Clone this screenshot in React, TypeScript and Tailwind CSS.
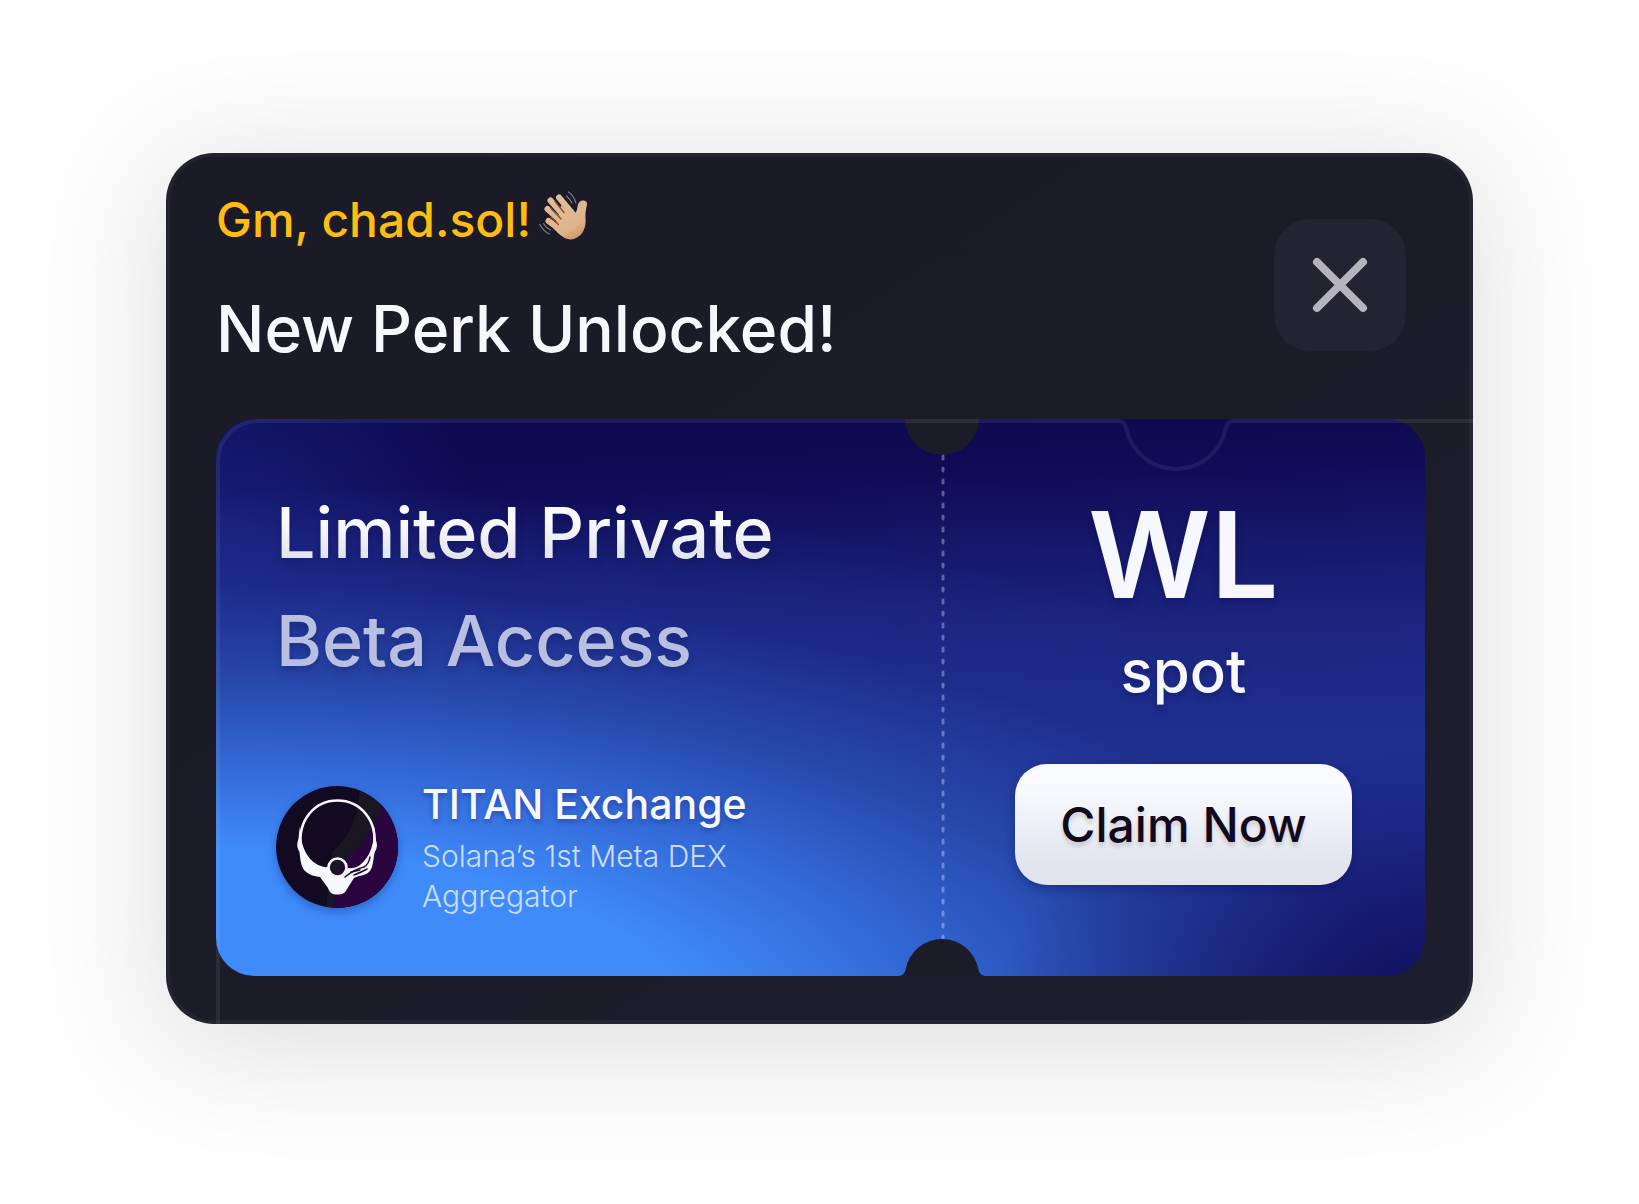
import React from "react";

function WavingHand() {
  return (
    <svg viewBox="0 0 50 50" className="mb-2 size-[50px]" role="img" aria-label="waving hand">
      <defs>
        <linearGradient id="skin" gradientUnits="userSpaceOnUse" x1="12" y1="6" x2="40" y2="50">
          <stop offset="0" stopColor="#e3bd98" />
          <stop offset="0.7" stopColor="#dfb48c" />
          <stop offset="1" stopColor="#c98f5c" />
        </linearGradient>
      </defs>
      <g stroke="url(#skin)" strokeWidth="6" strokeLinecap="round" fill="none">
        <path d="M11.5 9.5 L25 25" />
        <path d="M20 6.5 L33 22" />
        <path d="M8.5 18 L24 32" />
        <path d="M9.5 30 L22 39" />
      </g>
      <path
        d="M22 14 L31 22 C33 24 36 23 37.5 20 C39 17 38 13 41 10.5 C44 8.5 48.5 10 48 13.5 C47.5 17 46 21 46.5 27 C47.5 36 44 45 35 48 C29 49.5 25 47 20 43 L14 37 L20 26 Z"
        fill="url(#skin)"
      />
      <g stroke="#7a4a22" strokeWidth="1.2" strokeLinecap="round" fill="none">
        <path d="M16 10.5 L25 21.5" />
        <path d="M12 17.5 L22 28" />
        <path d="M11.5 26 L19.5 33.5" />
      </g>
      <g stroke="#777681" strokeWidth="1.3" strokeLinecap="round" fill="none">
        <path d="M29.5 1 Q35 5 37 12" />
        <path d="M27.5 5 Q31 8 33 12" />
        <path d="M0.8 33.5 Q4.5 40.5 10.5 43" />
        <path d="M4.5 32.5 Q7 37 11.5 39" />
      </g>
    </svg>
  );
}

function TitanLogo() {
  return (
    <svg
      viewBox="0 0 122 122"
      className="size-[122px] shrink-0 overflow-hidden rounded-full shadow-[0_4px_8px_rgba(20,30,120,0.35)]"
      role="img"
      aria-label="TITAN Exchange"
    >
      <rect width="122" height="122" fill="#120a20" />
      <path d="M84 0 C82 24 78 48 56 66 L50 122 H122 V0 Z" fill="#1a1624" />
      <path d="M108 12 C101 36 92 58 68 74 C60 90 60 105 58 122 H122 V12 Z" fill="#2b053f" />
      <g fill="none" stroke="#f7f8fd">
        <path d="M25 62 C21 34 39 14.5 61.5 14.5 C84 14.5 102 34 98 62" strokeWidth="2.6" />
        <circle cx="61.5" cy="81.5" r="9" strokeWidth="2.6" />
      </g>
      <path
        d="M24 40 C22.5 49 23 53 21.8 55 C20.5 59 21.5 63 23.5 66 C24.5 77 26 82 29 85 C35 90.5 40 90 44 91 L52 102 C54 107 56 108.5 61.5 108.5 C67 108.5 69 107 71 103 L78 92 C84 89 90 90 94 85 C97.5 80 97 73 98.8 66 C101.5 62 101.5 58 100 54.5 C99 51 99.5 47 98 40 C98.5 57 95 70 84 79 C80 82 76 82.5 71.5 82 C71 87 68 91 62 91 C56 91 53 86 53 80 C50 82 48 81 45 80 C33 76 24 62 24 40 Z"
        fill="#f7f8fd"
      />
      <g fill="none" stroke="#240a34" strokeWidth="1.5" strokeLinecap="round">
        <path d="M69 91 Q79 83 88 81 Q93 78 94 71" />
        <path d="M75 86 Q80 85 84 84" />
        <path d="M78 89 Q86 86 91 83" />
      </g>
    </svg>
  );
}

export default function App() {
  return (
    <main className="min-h-screen bg-[#fefefe] px-6 pt-[153px] pb-[180px] font-['Inter',sans-serif] font-medium text-[#f7f8fd]">
      <section className="relative mx-auto max-w-[1307px] overflow-hidden rounded-[48px] bg-linear-to-br from-[#1b1a27] via-[#1c1b28] to-[#1c1e2e] pr-12 pb-12 pl-[50px] shadow-[0_16px_120px_8px_rgba(0,0,0,0.13)]">
        <header className="flex items-start justify-between">
          <div className="pt-[38px]">
            <p className="flex items-center gap-2 text-[48px] leading-[56px] text-[#ffbd12]">
              Gm, chad.sol! <WavingHand />
            </p>
            <h1 className="mt-10 text-[64px] leading-[80px]">New Perk Unlocked!</h1>
          </div>
          <button
            type="button"
            aria-label="Close"
            className="mt-[66px] mr-[19px] grid size-[132px] place-items-center rounded-[36px] bg-[#242332] text-[#b5b3bb]"
          >
            <svg viewBox="0 0 56 56" className="size-14" fill="none" stroke="currentColor" strokeWidth="8" strokeLinecap="round">
              <path d="M5 5 L51 51 M51 5 L5 51" />
            </svg>
          </button>
        </header>

        <article className="relative mt-[50px] flex h-[557px] rounded-[38px] bg-[radial-gradient(ellipse_40%_50%_at_104%_108%,#120f5c_0%,#120f5ccc_30%,#120f5c44_70%,#120f5c00_100%),radial-gradient(ellipse_100%_82%_at_0%_110%,#3f8bfa_0%,#3f8bfa_40%,#3164d0_61%,#2646a8_78%,#1e2f9080_98%,#1e2f9000_120%),radial-gradient(ellipse_22%_60%_at_0%_30%,#2134a080_0%,#2134a000_100%),linear-gradient(178deg,#0d0a50_0%,#0f0b54_12%,#151769_25%,#1c247e_40%,#1f2f90_60%,#1f2f90_100%)]">
          <div className="flex min-w-0 flex-1 flex-col justify-between pt-[60px] pb-[58px] pl-[60px]">
            <h2 className="text-[70px] leading-[108px] drop-shadow-[0_4px_4px_rgba(10,10,70,0.3)]">
              <span className="block bg-linear-to-b from-[#f9faff] from-40% to-[#e0e2ec] to-75% bg-clip-text text-transparent">Limited Private</span>
              <span className="block text-[#b9bfe0]">Beta Access</span>
            </h2>
            <div className="flex items-center gap-6">
              <TitanLogo />
              <div className="pb-0.5">
                <h3 className="pb-1 text-[41px] leading-[56px] text-shadow-[0_3px_5px_rgba(20,30,130,0.4)]">TITAN Exchange</h3>
                <p className="max-w-[360px] text-[30px] leading-10 font-light text-[#cdddfc]">Solana’s 1st Meta DEX Aggregator</p>
              </div>
            </div>
          </div>
          <div className="flex w-[483px] flex-col items-center pt-[68px]">
            <p className="flex flex-col items-center text-shadow-[0_4px_6px_rgba(10,10,80,0.35)]">
              <span className="text-[120px] leading-[136px] font-semibold">WL</span>
              <span className="text-[60px] leading-[96px]">spot</span>
            </p>
            <button
              type="button"
              className="mt-[45px] h-[121px] w-[337px] rounded-[32px] bg-linear-to-b from-[#f9faff] from-20% to-[#e1e4ec] to-85% text-[48px] text-[#13091c] shadow-[0_4px_10px_rgba(10,15,90,0.35)] text-shadow-[0_4px_4px_rgba(19,9,28,0.15)]"
            >
              Claim Now
            </button>
          </div>

          <svg viewBox="0 0 86 557" className="absolute top-0 right-[440px] h-full w-[86px]" aria-hidden="true">
            <path d="M6 0 A37 36 0 0 0 80 0 Z" fill="#1c1b28" />
            <path d="M44 37 V520" stroke="#ffffff" strokeOpacity="0.32" strokeWidth="3" strokeDasharray="3 9" strokeLinecap="round" />
            <path d="M0 557 Q5.5 556 6.5 551 A37 37 0 0 1 79.5 551 Q80.5 556 86 557 Z" fill="#1c1c29" />
          </svg>
        </article>

        <svg
          viewBox="0 0 1257 607"
          className="pointer-events-none absolute right-0 bottom-0 h-[607px] w-[1257px]"
          fill="none"
          stroke="#ffffff"
          strokeOpacity="0.07"
          strokeWidth="4"
          aria-hidden="true"
        >
          <path d="M2 607 V44 A40 40 0 0 1 42 4 H902 Q908 4 910 11 A51 51 0 0 0 1010 11 Q1011 4 1018 4 H1257" />
        </svg>
        <div className="pointer-events-none absolute inset-0 rounded-[48px] border-4 border-white/4" />
      </section>
    </main>
  );
}
